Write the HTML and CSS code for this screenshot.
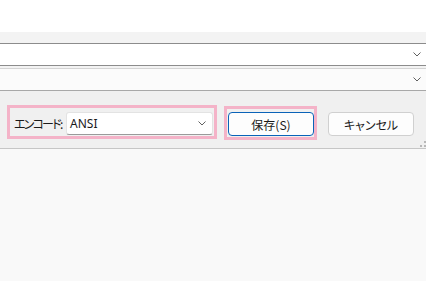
FILE: index.html
```html
<!DOCTYPE html>
<html lang="ja">
<head>
<meta charset="UTF-8">
<title>保存</title>
<link rel="stylesheet" href="styles.css">
</head>
<body>
<div class="top"></div>
<div class="strip"></div>
<div class="field field-main">
  <svg class="chev" width="8" height="5" viewBox="0 0 8 5"><path d="M0.5 0.5 L4 4 L7.5 0.5" fill="none" stroke="#606060" stroke-width="1"/></svg>
</div>
<div class="gap"></div>
<div class="field field-alt">
  <svg class="chev" width="8" height="5" viewBox="0 0 8 5"><path d="M0.5 0.5 L4 4 L7.5 0.5" fill="none" stroke="#606060" stroke-width="1"/></svg>
</div>
<div class="panel">
  <div class="mark mark-enc">
    <span class="label">エンコード:</span>
    <div class="combo">
      <span class="combo-text">ANSI</span>
      <svg class="combo-chev" width="8" height="5" viewBox="0 0 8 5"><path d="M0.5 0.5 L4 4 L7.5 0.5" fill="none" stroke="#606060" stroke-width="1"/></svg>
    </div>
  </div>
  <div class="mark mark-save">
    <button class="btn btn-default">保存(S)</button>
  </div>
  <button class="btn btn-cancel">キャンセル</button>
  <svg class="grip" width="6" height="6" viewBox="0 0 6 6">
    <rect x="4" y="0" width="2" height="2" fill="#b8b8b8"/>
    <rect x="0" y="4" width="2" height="2" fill="#b8b8b8"/>
    <rect x="4" y="4" width="2" height="2" fill="#b8b8b8"/>
  </svg>
</div>
</body>
</html>
```

FILE: styles.css
```css
body {
  margin: 0;
  background: #f9f9f9;
  font-family: "Noto Sans CJK JP", "Noto Sans", sans-serif;
  font-size: 12px;
  color: #1a1a1a;
}

.top {
  height: 32px;
  background: #ffffff;
}

.strip {
  height: 11px;
  background: #f3f3f3;
}

.field {
  height: 21px;
  display: flex;
  justify-content: flex-end;
  align-items: center;
  padding-right: 5px;
}

.field-main {
  background: #ffffff;
  border-top: 1px solid #8c8c8c;
  border-bottom: 1px solid #8c8c8c;
}

.field-alt {
  background: #fbfbfb;
  border-top: 1px solid #d4d4d4;
  border-bottom: 1px solid #a8a8a8;
}

.gap {
  height: 2px;
  background: #f3f3f3;
}

.panel {
  position: relative;
  height: 57px;
  background: #f0f0f0;
  border-bottom: 1px solid #c6c6c6;
  display: flex;
  align-items: flex-start;
  padding-left: 7px;
}

.mark {
  border: 3px solid #f4b3c8;
  display: flex;
  align-items: flex-start;
  flex-shrink: 0;
}

.mark-enc {
  margin-top: 14px;
  padding: 4px 0 0 4px;
  width: 200px;
  height: 24px;
}

.label {
  flex-shrink: 0;
  white-space: nowrap;
  width: 52px;
  line-height: 23px;
  font-size: 12px;
  font-feature-settings: "palt";
  letter-spacing: -1.8px;
}

.combo {
  flex-shrink: 0;
  width: 136px;
  height: 21px;
  background: #ffffff;
  border: 1px solid #e3e3e3;
  border-bottom-color: #9a9a9a;
  border-radius: 3px;
  display: flex;
  align-items: center;
  justify-content: space-between;
  padding: 0 6px 0 3px;
}

.combo-text {
  font-family: "Noto Sans", sans-serif;
  font-size: 12px;
}

.mark-save {
  margin-top: 15px;
  margin-left: 7px;
  padding: 3px 0 1px 1px;
}

.btn {
  font-family: "Noto Sans CJK JP", "Noto Sans", sans-serif;
  font-size: 12px;
  color: #1a1a1a;
  height: 24px;
  width: 86px;
  background: #fdfdfd;
  border-radius: 4px;
  padding: 0;
  font-feature-settings: "palt";
}

.btn-default {
  border: 1px solid #0a63b8;
}

.btn-cancel {
  flex-shrink: 0;
  margin-top: 21px;
  margin-left: 11px;
  border: 1px solid #d0d0d0;
}

.grip {
  position: absolute;
  right: 0;
  bottom: 1px;
}
```
